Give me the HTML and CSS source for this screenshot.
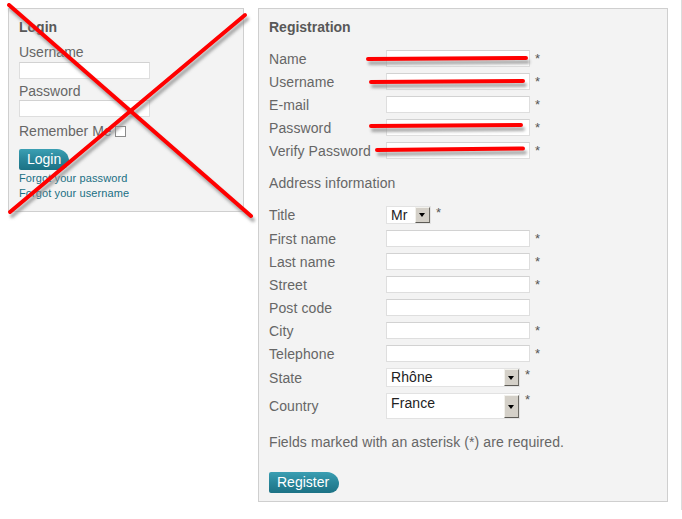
FILE: index.html
```html
<!DOCTYPE html>
<html>
<head>
<meta charset="utf-8">
<link rel="stylesheet" href="styles.css">
</head>
<body>
<div class="page">
  <div class="panel login">
    <h3 class="title">Login</h3>
    <div class="lbl lbl-user">Username</div>
    <input class="field field-login first" type="text">
    <div class="lbl lbl-pass">Password</div>
    <input class="field field-login second" type="password">
    <div class="remember">Remember Me<span class="check"></span></div>
    <div class="btn btn-login">Login</div>
    <a class="link first-link">Forgot your password</a>
    <a class="link">Forgot your username</a>
  </div>

  <div class="panel reg">
    <h3 class="title">Registration</h3>
    <div class="rows">
      <div class="row"><span class="rl">Name</span><input class="field" type="text"><span class="ast">*</span></div>
      <div class="row"><span class="rl">Username</span><input class="field" type="text"><span class="ast">*</span></div>
      <div class="row"><span class="rl">E-mail</span><input class="field" type="text"><span class="ast">*</span></div>
      <div class="row"><span class="rl">Password</span><input class="field" type="password"><span class="ast">*</span></div>
      <div class="row"><span class="rl">Verify Password</span><input class="field" type="password"><span class="ast">*</span></div>
    </div>
    <div class="section">Address information</div>
    <div class="rows">
      <div class="row row-title"><span class="rl">Title</span>
        <span class="sel sel-mr"><span class="sel-text">Mr</span><span class="arrow"></span></span><span class="ast ast-sel">*</span></div>
      <div class="row"><span class="rl">First name</span><input class="field" type="text"><span class="ast">*</span></div>
      <div class="row"><span class="rl">Last name</span><input class="field" type="text"><span class="ast">*</span></div>
      <div class="row"><span class="rl">Street</span><input class="field" type="text"><span class="ast">*</span></div>
      <div class="row"><span class="rl">Post code</span><input class="field" type="text"></div>
      <div class="row"><span class="rl">City</span><input class="field" type="text"><span class="ast">*</span></div>
      <div class="row"><span class="rl">Telephone</span><input class="field" type="text"><span class="ast">*</span></div>
      <div class="row row-state"><span class="rl">State</span>
        <span class="sel-wrap"><span class="sel sel-state"><span class="sel-text">Rhône</span><span class="arrow"></span></span><span class="ast ast-top">*</span></span></div>
      <div class="row row-country"><span class="rl">Country</span>
        <span class="sel-wrap"><span class="sel sel-country"><span class="sel-text">France</span><span class="arrow"></span></span><span class="ast ast-top">*</span></span></div>
    </div>
    <p class="note">Fields marked with an asterisk (*) are required.</p>
    <div class="btn btn-reg">Register</div>
  </div>
</div>

<svg class="marks" width="682" height="519" viewBox="0 0 682 519">
  <defs>
    <filter id="blur" x="-10%" y="-50%" width="120%" height="200%">
      <feGaussianBlur stdDeviation="1.6"/>
    </filter>
  </defs>
  <g class="shadow" filter="url(#blur)" transform="translate(2,4)">
    <line x1="9" y1="5" x2="251" y2="216"/>
    <line x1="10" y1="212" x2="245" y2="15"/>
    <line x1="368" y1="59" x2="526" y2="58"/>
    <line x1="371" y1="82" x2="523" y2="81"/>
    <line x1="371" y1="126" x2="521" y2="125"/>
    <line x1="377" y1="150" x2="523" y2="148.5"/>
  </g>
  <g class="red">
    <line x1="9" y1="5" x2="251" y2="216"/>
    <line x1="10" y1="212" x2="245" y2="15"/>
    <line x1="368" y1="59" x2="526" y2="58"/>
    <line x1="371" y1="82" x2="523" y2="81"/>
    <line x1="371" y1="126" x2="521" y2="125"/>
    <line x1="377" y1="150" x2="523" y2="148.5"/>
  </g>
</svg>
</body>
</html>
```

FILE: styles.css
```css
html {
  border-right: 1px solid #dcdcdc;
  background: #fff;
}
body {
  margin: 8px;
  font-family: "Liberation Sans", Arial, sans-serif;
  font-size: 14px;
  color: #666;
}
.page {
  display: flex;
  align-items: flex-start;
  gap: 14px;
}
.panel {
  background: #f3f3f3;
  border: 1px solid #cfcfcf;
  box-sizing: border-box;
}
.login {
  width: 236px;
  height: 204px;
  padding: 9px 10px 0 10px;
}
.reg {
  width: 410px;
  height: 494px;
  padding: 9px 10px 0 10px;
}
.title {
  margin: 0;
  font-size: 14px;
  line-height: 18px;
  font-weight: bold;
  color: #585858;
}
.lbl {
  line-height: 16px;
}
.lbl-user { margin-top: 8px; }
.lbl-pass { margin-top: 4px; }
.field {
  display: block;
  box-sizing: border-box;
  width: 144px;
  height: 17px;
  margin: 0;
  padding: 0 3px;
  border: 1px solid #dedede;
  border-top-color: #d2d2d2;
  background: #fff;
  font: inherit;
  outline: none;
}
.field-login { width: 131px; }
.field-login.first { margin-top: 2px; }
.field-login.second { margin-top: 1px; }
.remember {
  margin-top: 6px;
  line-height: 16px;
  display: flex;
  align-items: center;
}
.check {
  display: inline-block;
  width: 9px;
  height: 9px;
  margin-left: 3px;
  border: 1px solid #8a8a8a;
  background: #fff;
}
.btn {
  box-sizing: border-box;
  color: #fff;
  background: linear-gradient(#3b9fb3 0%, #2a889c 45%, #1c7285 100%);
  border-radius: 2px 12px 9px 2px;
  font-size: 14px;
  line-height: 21px;
  height: 21px;
}
.btn-login {
  margin-top: 10px;
  width: 50px;
  padding-left: 8px;
}
.btn-reg {
  margin-top: 22px;
  width: 70px;
  padding-left: 8px;
}
.link {
  display: block;
  font-size: 11px;
  line-height: 15px;
  color: #1a6f84;
  letter-spacing: 0.1px;
}
.first-link { margin-top: 1px; }

.rows:first-of-type { margin-top: 11px; }
.rows {
  display: flex;
  flex-direction: column;
  letter-spacing: 0.1px;
}
.row {
  display: flex;
  align-items: center;
  height: 23px;
}
.rl {
  width: 117px;
  flex: none;
}
.ast {
  margin-left: 5px;
  color: #555;
  font-size: 13px;
}
.section {
  margin-top: 13px;
  line-height: 16px;
  letter-spacing: 0.1px;
}
.section + .rows { margin-top: 11px; }
.row-title { height: 25px; }
.row-state { height: 25px; }
.row-country { height: 32px; }

.sel {
  display: inline-flex;
  box-sizing: border-box;
  background: #fff;
  border: 1px solid #e2e2e2;
  color: #222;
  position: relative;
}
.sel-text {
  flex: 1;
  padding-left: 4px;
}
.sel-mr {
  width: 45px;
  height: 18px;
  line-height: 16px;
  align-items: center;
}
.sel-state {
  width: 134px;
  height: 19px;
  line-height: 17px;
  align-items: center;
}
.sel-country {
  width: 134px;
  height: 26px;
  line-height: 17px;
  align-items: flex-start;
  padding-top: 1px;
}
.arrow {
  flex: none;
  width: 15px;
  height: 16px;
  box-sizing: border-box;
  background: #d4d0c8;
  border: 1px solid;
  border-color: #f2f1ec #6e6c66 #5d5b56 #f2f1ec;
  position: relative;
  margin-right: 0;
}
.arrow::after {
  content: "";
  position: absolute;
  left: 3px;
  top: 5px;
  border-left: 3.5px solid transparent;
  border-right: 3.5px solid transparent;
  border-top: 4px solid #000;
}
.sel-state .arrow { height: 17px; }
.sel-state .arrow::after { top: 6px; }
.sel-country .arrow {
  height: 23px;
  align-self: flex-end;
  margin-top: 1px;
}
.sel-country .arrow::after { top: 9px; }
.ast-sel {
  align-self: flex-start;
  margin-top: 3px;
}
.sel-wrap {
  display: flex;
  align-items: flex-start;
}
.ast-top {
  line-height: 14px;
}
.note {
  margin: 12px 0 0 0;
  line-height: 16px;
  letter-spacing: 0.1px;
}
.marks {
  position: absolute;
  left: 0;
  top: 0;
  pointer-events: none;
}
.marks line {
  stroke-width: 4;
  stroke-linecap: round;
}
.marks .red line { stroke: #ff0000; }
.marks .shadow line { stroke: #8c8c8c; opacity: 0.75; }
```
